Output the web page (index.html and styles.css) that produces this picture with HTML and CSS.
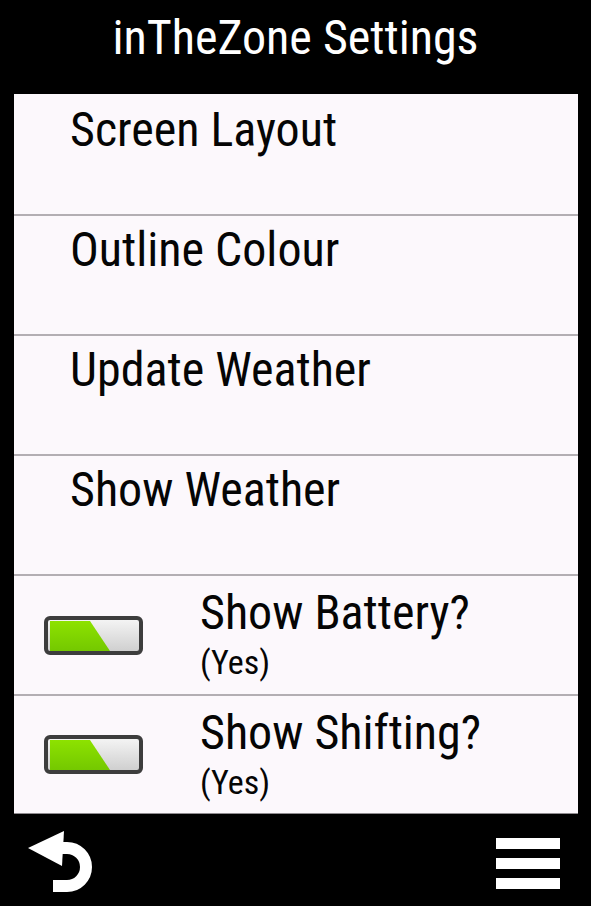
FILE: index.html
```html
<!DOCTYPE html>
<html>
<head>
<meta charset="utf-8">
<link rel="stylesheet" href="styles.css">
</head>
<body>
<div class="screen">
  <header class="titlebar">
    <h1 class="title">inTheZone Settings</h1>
  </header>
  <main class="panel">
    <div class="row"><span class="label">Screen Layout</span></div>
    <div class="row"><span class="label">Outline Colour</span></div>
    <div class="row"><span class="label">Update Weather</span></div>
    <div class="row"><span class="label">Show Weather</span></div>
    <div class="row toggle-row">
      <svg class="toggle" width="99" height="39" viewBox="0 0 99 39">
        <defs>
          <linearGradient id="grey1" x1="0" y1="0" x2="0" y2="1">
            <stop offset="0" stop-color="#f6f6f6"/>
            <stop offset="1" stop-color="#cdcdcd"/>
          </linearGradient>
          <linearGradient id="green1" x1="0" y1="0" x2="0" y2="1">
            <stop offset="0" stop-color="#8de200"/>
            <stop offset="1" stop-color="#74c800"/>
          </linearGradient>
        </defs>
        <rect x="2" y="2" width="95" height="35" rx="4" fill="url(#grey1)" stroke="#3d3d3d" stroke-width="4"/>
        <polygon points="6,5 46,5 66,35 6,35" fill="url(#green1)"/>
      </svg>
      <div class="toggle-text">
        <span class="label">Show Battery?</span>
        <span class="value">(Yes)</span>
      </div>
    </div>
    <div class="row toggle-row last">
      <svg class="toggle" width="99" height="39" viewBox="0 0 99 39">
        <defs>
          <linearGradient id="grey2" x1="0" y1="0" x2="0" y2="1">
            <stop offset="0" stop-color="#f6f6f6"/>
            <stop offset="1" stop-color="#cdcdcd"/>
          </linearGradient>
          <linearGradient id="green2" x1="0" y1="0" x2="0" y2="1">
            <stop offset="0" stop-color="#8de200"/>
            <stop offset="1" stop-color="#74c800"/>
          </linearGradient>
        </defs>
        <rect x="2" y="2" width="95" height="35" rx="4" fill="url(#grey2)" stroke="#3d3d3d" stroke-width="4"/>
        <polygon points="6,5 46,5 66,35 6,35" fill="url(#green2)"/>
      </svg>
      <div class="toggle-text">
        <span class="label">Show Shifting?</span>
        <span class="value">(Yes)</span>
      </div>
    </div>
  </main>
  <footer class="footer">
    <svg class="back" width="72" height="70" viewBox="0 0 72 70">
      <polygon points="3,20 39,3 37,38" fill="#fff"/>
      <path d="M32 20 H42 A19 19 0 0 1 42 58 H28" fill="none" stroke="#fff" stroke-width="12"/>
    </svg>
    <div class="menu">
      <span class="bar"></span>
      <span class="bar"></span>
      <span class="bar"></span>
    </div>
  </footer>
</div>
</body>
</html>
```

FILE: styles.css
```css
html, body {
  margin: 0;
  padding: 0;
  background: #000;
}

.screen {
  width: 591px;
  height: 906px;
  display: flex;
  flex-direction: column;
  background: #000;
  font-family: Roboto, "Liberation Sans", sans-serif;
  font-stretch: 75%;
  font-weight: 430;
}

.titlebar {
  height: 94px;
  box-sizing: border-box;
  display: flex;
  justify-content: center;
  padding-top: 15px;
}

.title {
  margin: 0;
  color: #fff;
  font-size: 48px;
  font-weight: 430;
  line-height: 46px;
}

.panel {
  margin: 0 13px 0 14px;
  background: #fcf8fc;
  height: 720px;
  box-sizing: border-box;
  padding-top: 2px;
  display: flex;
  flex-direction: column;
  border-bottom: 1px solid #8f8b8f;
}

.row {
  height: 120px;
  box-sizing: border-box;
  border-bottom: 2px solid #b3aeb3;
  padding: 11px 0 0 56px;
  flex: none;
}

.row.last {
  border-bottom: none;
  height: 117px;
}

.label {
  display: block;
  font-size: 48px;
  line-height: 46px;
  color: #050505;
}

.toggle-row {
  display: flex;
  align-items: center;
  padding: 0 0 0 30px;
}

.toggle {
  flex: none;
  display: block;
}

.toggle-text {
  align-self: flex-start;
  margin-left: 57px;
  display: flex;
  flex-direction: column;
  padding-top: 14px;
}

.value {
  display: block;
  margin-top: 10px;
  font-size: 34px;
  line-height: 32px;
  color: #050505;
}

.footer {
  flex: 1;
  display: flex;
  justify-content: space-between;
  align-items: flex-start;
  padding: 14px 31px 0 25px;
}

.back {
  display: block;
}

.menu {
  margin-top: 10px;
  width: 64px;
  display: flex;
  flex-direction: column;
  gap: 9px;
}

.bar {
  display: block;
  height: 11px;
  background: #fff;
}
```
